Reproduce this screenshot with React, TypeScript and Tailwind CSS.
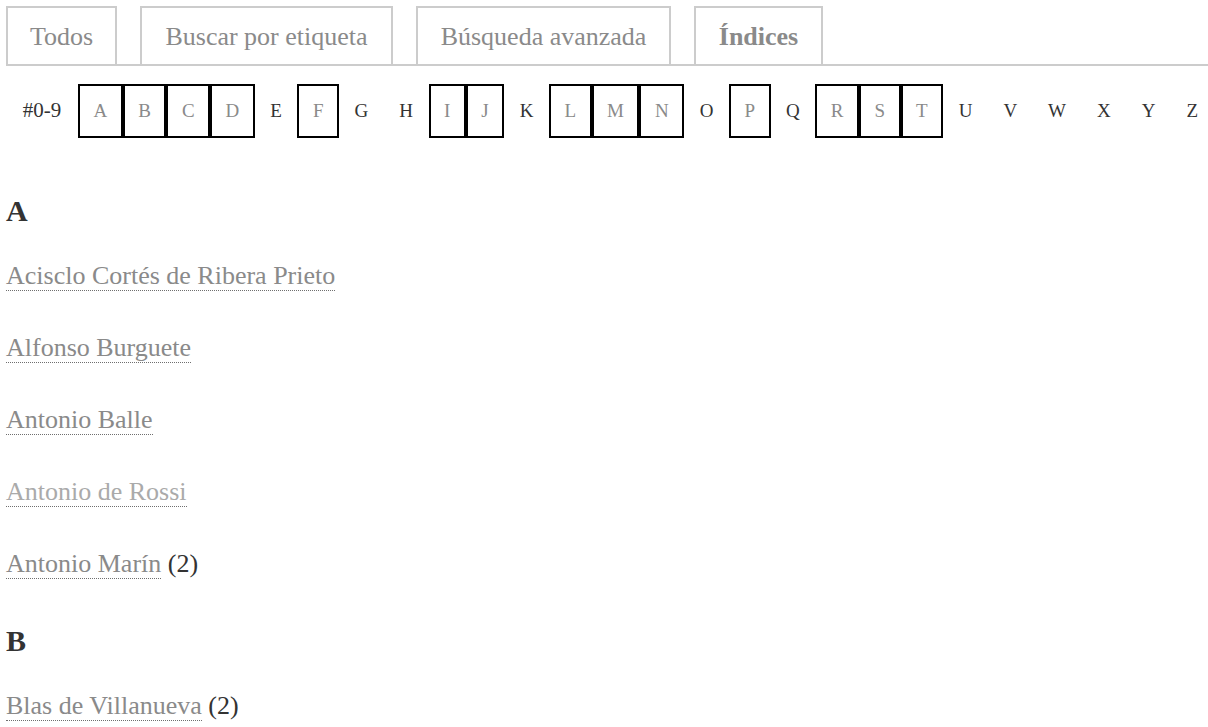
import React from 'react'

const tabs = [
  { label: 'Todos', w: 'w-[111px]', active: false },
  { label: 'Buscar por etiqueta', w: 'w-[253px]', active: false },
  { label: 'Búsqueda avanzada', w: 'w-[255px]', active: false },
  { label: 'Índices', w: 'w-[129px]', active: true },
]

const letters = 'ABCDEFGHIJKLMNOPQRSTUVWXYZ'.split('')
const linked = new Set(['A', 'B', 'C', 'D', 'F', 'I', 'J', 'L', 'M', 'N', 'P', 'R', 'S', 'T'])

type Entry = { name: string; count?: number; visited?: boolean }

const sections: { letter: string; entries: Entry[] }[] = [
  {
    letter: 'A',
    entries: [
      { name: 'Acisclo Cortés de Ribera Prieto' },
      { name: 'Alfonso Burguete' },
      { name: 'Antonio Balle' },
      { name: 'Antonio de Rossi', visited: true },
      { name: 'Antonio Marín', count: 2 },
    ],
  },
  {
    letter: 'B',
    entries: [{ name: 'Blas de Villanueva', count: 2 }],
  },
]

function Tabs() {
  return (
    <nav className="flex gap-[23px] border-b-2 border-[#cccccc]">
      {tabs.map((t) => (
        <a
          key={t.label}
          href="#"
          className={`${t.w} h-[58px] shrink-0 flex items-center justify-center border-2 border-b-0 border-[#cccccc] text-[26px] text-[#8a8a8a] ${t.active ? 'font-bold' : ''}`}
        >
          {t.label}
        </a>
      ))}
    </nav>
  )
}

function LetterBar() {
  return (
    <ul className="flex flex-nowrap mt-[18px] text-[19px]">
      <li className="w-[72px] h-[54px] shrink-0 flex items-center justify-center text-[#333333] text-[21px]">
        #0-9
      </li>
      {letters.map((l) =>
        linked.has(l) ? (
          <li key={l} className="shrink-0">
            <a
              href="#"
              className="h-[54px] px-[13.5px] flex items-center border-2 border-black text-[#8a8a8a]"
            >
              {l}
            </a>
          </li>
        ) : (
          <li
            key={l}
            className="h-[54px] px-[13.5px] shrink-0 flex items-center border-2 border-transparent text-[#333333]"
          >
            {l}
          </li>
        ),
      )}
    </ul>
  )
}

export default function App() {
  return (
    <div className="h-screen overflow-hidden bg-white pt-[6px] pl-[6px] font-['Liberation_Serif','Times_New_Roman',serif]">
      <Tabs />
      <LetterBar />
      {sections.map((s, i) => (
        <section key={s.letter} className={i === 0 ? 'mt-[58px]' : 'mt-[49px]'}>
          <h2 className="text-[30px] leading-[30px] font-bold text-[#333333]">{s.letter}</h2>
          <div className="mt-[37px] flex flex-col gap-[46px]">
            {s.entries.map((e) => (
              <div key={e.name} className="text-[26px] leading-[26px] text-[#333333]">
                <a
                  href="#"
                  className={`border-b border-dotted border-[#6f6f6f] ${e.visited ? 'text-[#aaaaaa]' : 'text-[#8a8a8a]'}`}
                >
                  {e.name}
                </a>
                {e.count ? <span> ({e.count})</span> : null}
              </div>
            ))}
          </div>
        </section>
      ))}
    </div>
  )
}
